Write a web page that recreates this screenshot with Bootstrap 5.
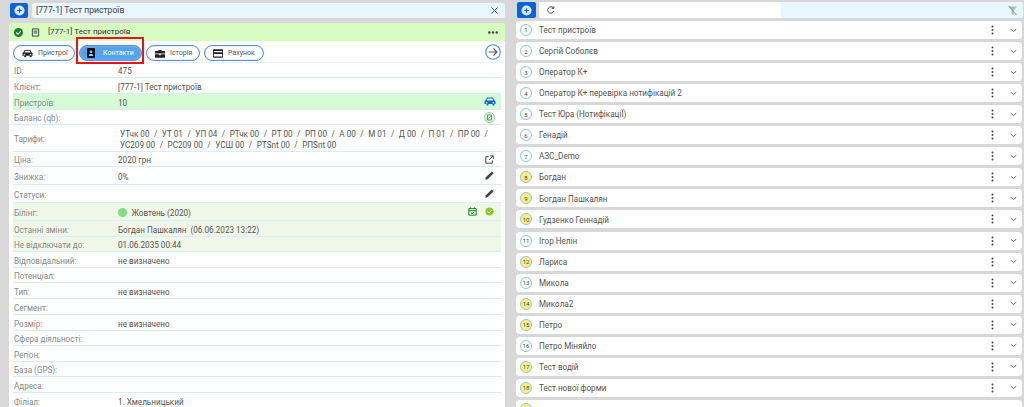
<!DOCTYPE html>
<html lang="uk"><head><meta charset="utf-8"><title>Контакти</title>
<link rel="stylesheet" href="https://cdn.jsdelivr.net/npm/bootstrap@5.3.0/dist/css/bootstrap.min.css">
<style>
html,body{height:407px;overflow:hidden}
body{background:#d8d8d8;font-family:Roboto,"Noto Sans",sans-serif;font-size:8.15px;color:#555;line-height:1.2}
.page{padding:0 1px 0 9px;gap:11px;height:407px;overflow:hidden}
.side-l{width:496px;flex:none;padding-top:3px}
.side-r{flex:1;min-width:0;padding-top:2px}
.add-btn{width:18px;height:15px;margin-left:1px;background:#0a62d8;border-radius:2px;flex:none}
.side-r .add-btn{width:19px;height:16px}
.add-btn svg{width:11px;height:11px}
.top-row{margin-bottom:1px}
.top-field{height:15px;background:#e8f6ff;border-radius:2px;margin-left:4px;padding:0 7px 0 4px;font-size:8.6px;color:#444}
.top-field.plain{background:#fff;border-radius:2px 0 0 2px;width:242px;height:16px;margin-left:3px;flex:none;padding:0 0 0 8px}
.top-field.tint{height:16px;margin-left:0;border-radius:0 2px 2px 0;padding-right:5px}
.doc-head{height:18px;margin-top:5px;background:#d6fcc2;border-radius:3px 3px 0 0;padding:0 7px 0 5px;font-size:8px;color:#333}
.doc-body{background:#fff;padding:0 4px;height:370px}
.tab-row{height:22px;padding-top:4px;border-bottom:1px solid #eef3f6}
.tab-pill{height:16px;border:1px solid #5b93dc;border-radius:8px;background:#fff;color:#555;font-size:7px;gap:5px;padding:0 0 0 8px;margin-right:4px;box-shadow:inset 0 0 2px #a9c8ee;white-space:nowrap}
.tab-pill.on{background:#53a4ec;color:#fff;border-color:#5b93dc;gap:8px;padding-left:7px}
.w1{width:62px}.w2{width:63px}.w3{width:54px}.w4{width:60px}
.red-frame{position:absolute;left:63px;top:-4px;width:68px;height:27px;border:2px solid #e8141c;pointer-events:none}
.go-btn{width:16px;height:16px;margin-top:-1px}
.info-row{min-height:16px;border-bottom:1px solid #d6effa;padding:4px 0 0 1px}
.info-row.hi{min-height:18px}
.info-row.big{min-height:27px;padding-top:4px}
.info-row.sm{min-height:15px}
.info-row.green{background:#d6fcd6}
.info-row.pale{background:#f0f6e8}
.lbl{width:104px;flex:none;color:#888}
.val{flex:1;min-width:0;color:#555}
.tariff{padding-left:2px;line-height:10.8px;white-space:nowrap}
.sep{margin:0 2.5px}
.ico{flex:none;width:11px;height:11px;margin-right:6px;margin-top:-4px}
.dot{width:8.5px;height:8.5px;border-radius:50%;background:#7ee083;margin-right:3px;display:inline-block;vertical-align:-1px}
.list-line{height:18px;margin:3.06px 1px 0 0;background:#fff;border-radius:4px;padding-right:5px;color:#555}
.list-line>.flex-grow-1{padding-top:2px}
.num{width:12px;height:12px;border-radius:50%;border:1px solid #8cc4f4;font-size:6px;margin:0 7px 0 4px;flex:none;background:#fff;color:#444}
.num.yl{background:#fbf07c}
.kebab{width:3px;margin-right:16px;flex:none}
</style></head><body>
<svg width="0" height="0" class="position-absolute">
<symbol id="car" viewBox="0 0 24 18"><path fill="currentColor" d="M6 1h12l3 6 2 1v6h-2v3h-4v-3H9v3H5v-3H1V8l2-1zm1 2L5.500 7h13L17 3zM5 10a1.500 1.500 0 0 0 0 3h2v-2zm14 0-2 1v2h2a1.500 1.500 0 0 0 0-3z"/></symbol>
<symbol id="dots" viewBox="0 0 4 14"><circle cx="2" cy="2" r="1.400" fill="#444"/><circle cx="2" cy="7" r="1.400" fill="#444"/><circle cx="2" cy="12" r="1.400" fill="#444"/></symbol>
<symbol id="chev" viewBox="0 0 10 6"><path d="M1 1l4 3.500L9 1" fill="none" stroke="#555" stroke-width="1.200"/></symbol>
<symbol id="pen" viewBox="0 0 12 12"><path fill="#444" d="M8.500 1.500l2 2L4 10 1.500 10.500 2 8z"/></symbol>
<symbol id="plus" viewBox="0 0 12 12"><circle cx="6" cy="6" r="5.500" fill="#fff" opacity=".85"/><path d="M3.500 6h5M6 3.500v5" stroke="#0a62d8" stroke-width="1.300"/></symbol>
</svg>
<div class="page d-flex">
<section class="side-l">
  <div class="d-flex align-items-center"><span class="add-btn d-flex align-items-center justify-content-center"><svg><use href="#plus"/></svg></span>
    <div class="top-field flex-grow-1 d-flex align-items-center justify-content-between"><span>[777-1] Тест пристроїв</span>
    <svg width="7" height="7" viewBox="0 0 7 7"><path d="M.5.500l6 6M6.500.500l-6 6" stroke="#555" stroke-width="1"/></svg></div></div>
  <div class="doc-head d-flex align-items-center">
    <svg width="9" height="9" viewBox="0 0 10 10"><circle cx="5" cy="5" r="5" fill="#1b7f2e"/><path d="M2.500 5l2 2 3-3.500" fill="none" stroke="#fff" stroke-width="1.200"/></svg>
    <svg class="ms-2" width="9" height="9" viewBox="0 0 10 10"><path d="M1.500 1h7v8h-7zM3 3.500h4M3 5.500h4" fill="none" stroke="#333" stroke-width="1"/></svg>
    <span class="flex-grow-1 ms-2">[777-1] Тест пристроїв</span>
    <svg width="10" height="3" viewBox="0 0 10 3"><circle cx="1.300" cy="1.500" r="1.200" fill="#444"/><circle cx="5" cy="1.500" r="1.200" fill="#444"/><circle cx="8.700" cy="1.500" r="1.200" fill="#444"/></svg>
  </div>
  <div class="doc-body">
    <div class="tab-row d-flex position-relative">
      <div class="tab-pill w1 d-flex align-items-center"><svg width="11" height="9" viewBox="0 0 24 18" style="color:#222"><use href="#car"/></svg><span>Пристрої</span></div>
      <div class="tab-pill on w2 d-flex align-items-center"><svg width="8" height="10" viewBox="0 0 8 10"><rect width="8" height="10" rx="1" fill="#111"/><circle cx="4" cy="3.800" r="1.300" fill="#9cf"/><path d="M1.800 8c0-3 4.400-3 4.400 0z" fill="#9cf"/></svg><span>Контакти</span></div>
      <div class="tab-pill w3 d-flex align-items-center"><svg width="10" height="9" viewBox="0 0 12 10"><path d="M4 2V.700h4V2h4v3H0V2zM0 6h5v1h2V6h5v4H0z" fill="#222"/></svg><span>Історія</span></div>
      <div class="tab-pill w4 d-flex align-items-center"><svg width="10" height="9" viewBox="0 0 12 10"><path d="M1 0h10a1 1 0 0 1 1 1v8a1 1 0 0 1-1 1H1a1 1 0 0 1-1-1V1a1 1 0 0 1 1-1zm0 2v1.500h10V2zm0 3.500V8.500h10v-3z" fill="#222"/></svg><span>Рахунок</span></div>
      <span class="red-frame"></span>
      <svg class="go-btn ms-auto" viewBox="0 0 16 16"><circle cx="8" cy="8" r="7.300" fill="#fff" stroke="#4a8ce0" stroke-width="1.100"/><path d="M3.800 8h8M8.500 4.500 12 8l-3.500 3.500" fill="none" stroke="#555" stroke-width="1.100"/></svg>
    </div>
    <div class="info-row sm d-flex align-items-center"><span class="lbl">ID:</span><span class="val">475</span></div>
    <div class="info-row d-flex align-items-center"><span class="lbl">Клієнт:</span><span class="val">[777-1] Тест пристроїв</span></div>
    <div class="info-row green d-flex align-items-center"><span class="lbl">Пристроїв:</span><span class="val">10</span><svg class="ico" style="color:#1565d8;width:12px;margin-right:5px" viewBox="0 0 24 18"><use href="#car"/></svg></div>
    <div class="info-row sm d-flex align-items-center"><span class="lbl">Баланс (qb):</span><span class="val"></span><svg class="ico" viewBox="0 0 11 11"><circle cx="5.500" cy="5.500" r="5" fill="#e4f6e4" stroke="#8fcf9a"/><path d="M3.500 3h4v5h-4zM4.500 6.500 6.500 4.500" fill="none" stroke="#4aa35a"/></svg></div>
    <div class="info-row big d-flex align-items-center"><span class="lbl">Тарифи:</span><span class="val tariff">УТчк 00 <span class="sep">/</span> УТ 01 <span class="sep">/</span> УП 04 <span class="sep">/</span> РТчк 00 <span class="sep">/</span> РТ 00 <span class="sep">/</span> РП 00 <span class="sep">/</span> А 00 <span class="sep">/</span> М 01 <span class="sep">/</span> Д 00 <span class="sep">/</span> П 01 <span class="sep">/</span> ПР 00 <span class="sep">/</span><br>УС209 00 <span class="sep">/</span> РС209 00 <span class="sep">/</span> УСШ 00 <span class="sep">/</span> РТSnt 00 <span class="sep">/</span> РПSnt 00</span></div>
    <div class="info-row sm d-flex align-items-center"><span class="lbl">Ціна:</span><span class="val">2020 грн</span><svg class="ico" style="width:9px;height:9px;margin-right:7px" viewBox="0 0 11 11"><path d="M9 6.500V10H1V2h3.500M6 1h4v4M10 1 5 6" fill="none" stroke="#444" stroke-width="1.200"/></svg></div>
    <div class="info-row hi d-flex align-items-center"><span class="lbl">Знижка:</span><span class="val">0%</span><svg class="ico" viewBox="0 0 12 12"><use href="#pen"/></svg></div>
    <div class="info-row hi d-flex align-items-center"><span class="lbl">Статуси:</span><span class="val"></span><svg class="ico" viewBox="0 0 12 12"><use href="#pen"/></svg></div>
    <div class="info-row hi pale d-flex align-items-center"><span class="lbl">Білінг:</span><span class="val"><i class="dot"></i> Жовтень (2020)</span>
      <svg class="ico me-2" style="width:9px;height:9px" viewBox="0 0 11 11"><path d="M1 2h9v8H1zM1 4.500h9M3 .500v2M8 .500v2M3.500 7l1.500 1 2.500-2" fill="none" stroke="#128a2a" stroke-width="1.200"/></svg>
      <svg class="ico" style="width:9px;height:9px;margin-right:7px" viewBox="0 0 10 10"><circle cx="5" cy="5" r="4.500" fill="#8ccb2e"/><path d="M2.800 5l1.600 1.600L7.300 3.700" fill="none" stroke="#fff" stroke-width="1.100"/></svg></div>
    <div class="info-row pale d-flex align-items-center"><span class="lbl">Останні зміни:</span><span class="val">Богдан Пашкалян &nbsp;(06.06.2023 13:22)</span></div>
    <div class="info-row sm pale d-flex align-items-center"><span class="lbl">Не відключати до:</span><span class="val">01.06.2035 00:44</span></div>
    <div class="info-row d-flex align-items-center"><span class="lbl">Відповідальний:</span><span class="val">не визначено</span></div>
    <div class="info-row sm d-flex align-items-center"><span class="lbl">Потенціал:</span></div>
    <div class="info-row d-flex align-items-center"><span class="lbl">Тип:</span><span class="val">не визначено</span></div>
    <div class="info-row d-flex align-items-center"><span class="lbl">Сегмент:</span></div>
    <div class="info-row d-flex align-items-center"><span class="lbl">Розмір:</span><span class="val">не визначено</span></div>
    <div class="info-row sm d-flex align-items-center"><span class="lbl">Сфера діяльності:</span></div>
    <div class="info-row d-flex align-items-center"><span class="lbl">Регіон:</span></div>
    <div class="info-row sm d-flex align-items-center"><span class="lbl">База (GPS):</span></div>
    <div class="info-row d-flex align-items-center"><span class="lbl">Адреса:</span></div>
    <div class="info-row d-flex align-items-center"><span class="lbl">Філіал:</span><span class="val">1. Хмельницький</span></div>
  </div>
</section>
<section class="side-r">
  <div class="top-row d-flex align-items-center"><span class="add-btn d-flex align-items-center justify-content-center"><svg><use href="#plus"/></svg></span>
    <div class="top-field plain d-flex align-items-center"><svg width="8" height="8" viewBox="0 0 10 10"><path d="M8.700 6.200A4 4 0 1 1 7.800 2.200M8.500.500v2.500H6" fill="none" stroke="#444" stroke-width="1.200"/></svg></div>
    <div class="top-field tint flex-grow-1 d-flex align-items-center justify-content-end"><svg width="11" height="11" viewBox="0 0 12 12"><path d="M1 1.500h10L7.500 6v5L5 9.500V6z" fill="#b4bcc0"/><path d="M2 1l8.500 10" stroke="#8a9296" stroke-width="1"/></svg></div>
  </div>
  <div class="list-line d-flex align-items-center"><span class="num d-flex align-items-center justify-content-center">1</span><span class="flex-grow-1">Тест пристроїв</span><svg class="kebab" height="10" viewBox="0 0 4 14"><use href="#dots"/></svg><svg width="7" height="5" viewBox="0 0 10 6"><use href="#chev"/></svg></div>
  <div class="list-line d-flex align-items-center"><span class="num d-flex align-items-center justify-content-center">2</span><span class="flex-grow-1">Сергій Соболєв</span><svg class="kebab" height="10" viewBox="0 0 4 14"><use href="#dots"/></svg><svg width="7" height="5" viewBox="0 0 10 6"><use href="#chev"/></svg></div>
  <div class="list-line d-flex align-items-center"><span class="num d-flex align-items-center justify-content-center">3</span><span class="flex-grow-1">Оператор К+</span><svg class="kebab" height="10" viewBox="0 0 4 14"><use href="#dots"/></svg><svg width="7" height="5" viewBox="0 0 10 6"><use href="#chev"/></svg></div>
  <div class="list-line d-flex align-items-center"><span class="num d-flex align-items-center justify-content-center">4</span><span class="flex-grow-1">Оператор К+ перевірка нотифікацій 2</span><svg class="kebab" height="10" viewBox="0 0 4 14"><use href="#dots"/></svg><svg width="7" height="5" viewBox="0 0 10 6"><use href="#chev"/></svg></div>
  <div class="list-line d-flex align-items-center"><span class="num d-flex align-items-center justify-content-center">5</span><span class="flex-grow-1">Тест Юра (НотифікаціЇ)</span><svg class="kebab" height="10" viewBox="0 0 4 14"><use href="#dots"/></svg><svg width="7" height="5" viewBox="0 0 10 6"><use href="#chev"/></svg></div>
  <div class="list-line d-flex align-items-center"><span class="num d-flex align-items-center justify-content-center">6</span><span class="flex-grow-1">Генадій</span><svg class="kebab" height="10" viewBox="0 0 4 14"><use href="#dots"/></svg><svg width="7" height="5" viewBox="0 0 10 6"><use href="#chev"/></svg></div>
  <div class="list-line d-flex align-items-center"><span class="num d-flex align-items-center justify-content-center">7</span><span class="flex-grow-1">АЗС_Demo</span><svg class="kebab" height="10" viewBox="0 0 4 14"><use href="#dots"/></svg><svg width="7" height="5" viewBox="0 0 10 6"><use href="#chev"/></svg></div>
  <div class="list-line d-flex align-items-center"><span class="num yl d-flex align-items-center justify-content-center">8</span><span class="flex-grow-1">Богдан</span><svg class="kebab" height="10" viewBox="0 0 4 14"><use href="#dots"/></svg><svg width="7" height="5" viewBox="0 0 10 6"><use href="#chev"/></svg></div>
  <div class="list-line d-flex align-items-center"><span class="num yl d-flex align-items-center justify-content-center">9</span><span class="flex-grow-1">Богдан Пашкалян</span><svg class="kebab" height="10" viewBox="0 0 4 14"><use href="#dots"/></svg><svg width="7" height="5" viewBox="0 0 10 6"><use href="#chev"/></svg></div>
  <div class="list-line d-flex align-items-center"><span class="num yl d-flex align-items-center justify-content-center">10</span><span class="flex-grow-1">Гудзенко Геннадій</span><svg class="kebab" height="10" viewBox="0 0 4 14"><use href="#dots"/></svg><svg width="7" height="5" viewBox="0 0 10 6"><use href="#chev"/></svg></div>
  <div class="list-line d-flex align-items-center"><span class="num d-flex align-items-center justify-content-center">11</span><span class="flex-grow-1">Ігор Нелін</span><svg class="kebab" height="10" viewBox="0 0 4 14"><use href="#dots"/></svg><svg width="7" height="5" viewBox="0 0 10 6"><use href="#chev"/></svg></div>
  <div class="list-line d-flex align-items-center"><span class="num yl d-flex align-items-center justify-content-center">12</span><span class="flex-grow-1">Лариса</span><svg class="kebab" height="10" viewBox="0 0 4 14"><use href="#dots"/></svg><svg width="7" height="5" viewBox="0 0 10 6"><use href="#chev"/></svg></div>
  <div class="list-line d-flex align-items-center"><span class="num d-flex align-items-center justify-content-center">13</span><span class="flex-grow-1">Микола</span><svg class="kebab" height="10" viewBox="0 0 4 14"><use href="#dots"/></svg><svg width="7" height="5" viewBox="0 0 10 6"><use href="#chev"/></svg></div>
  <div class="list-line d-flex align-items-center"><span class="num yl d-flex align-items-center justify-content-center">14</span><span class="flex-grow-1">Микола2</span><svg class="kebab" height="10" viewBox="0 0 4 14"><use href="#dots"/></svg><svg width="7" height="5" viewBox="0 0 10 6"><use href="#chev"/></svg></div>
  <div class="list-line d-flex align-items-center"><span class="num yl d-flex align-items-center justify-content-center">15</span><span class="flex-grow-1">Петро</span><svg class="kebab" height="10" viewBox="0 0 4 14"><use href="#dots"/></svg><svg width="7" height="5" viewBox="0 0 10 6"><use href="#chev"/></svg></div>
  <div class="list-line d-flex align-items-center"><span class="num d-flex align-items-center justify-content-center">16</span><span class="flex-grow-1">Петро Міняйло</span><svg class="kebab" height="10" viewBox="0 0 4 14"><use href="#dots"/></svg><svg width="7" height="5" viewBox="0 0 10 6"><use href="#chev"/></svg></div>
  <div class="list-line d-flex align-items-center"><span class="num yl d-flex align-items-center justify-content-center">17</span><span class="flex-grow-1">Тест водій</span><svg class="kebab" height="10" viewBox="0 0 4 14"><use href="#dots"/></svg><svg width="7" height="5" viewBox="0 0 10 6"><use href="#chev"/></svg></div>
  <div class="list-line d-flex align-items-center"><span class="num yl d-flex align-items-center justify-content-center">18</span><span class="flex-grow-1">Тест нової форми</span><svg class="kebab" height="10" viewBox="0 0 4 14"><use href="#dots"/></svg><svg width="7" height="5" viewBox="0 0 10 6"><use href="#chev"/></svg></div>
  <div class="list-line d-flex align-items-center"><span class="num yl d-flex align-items-center justify-content-center"></span><span class="flex-grow-1"></span></div>
</section>
</div>
</body></html>
